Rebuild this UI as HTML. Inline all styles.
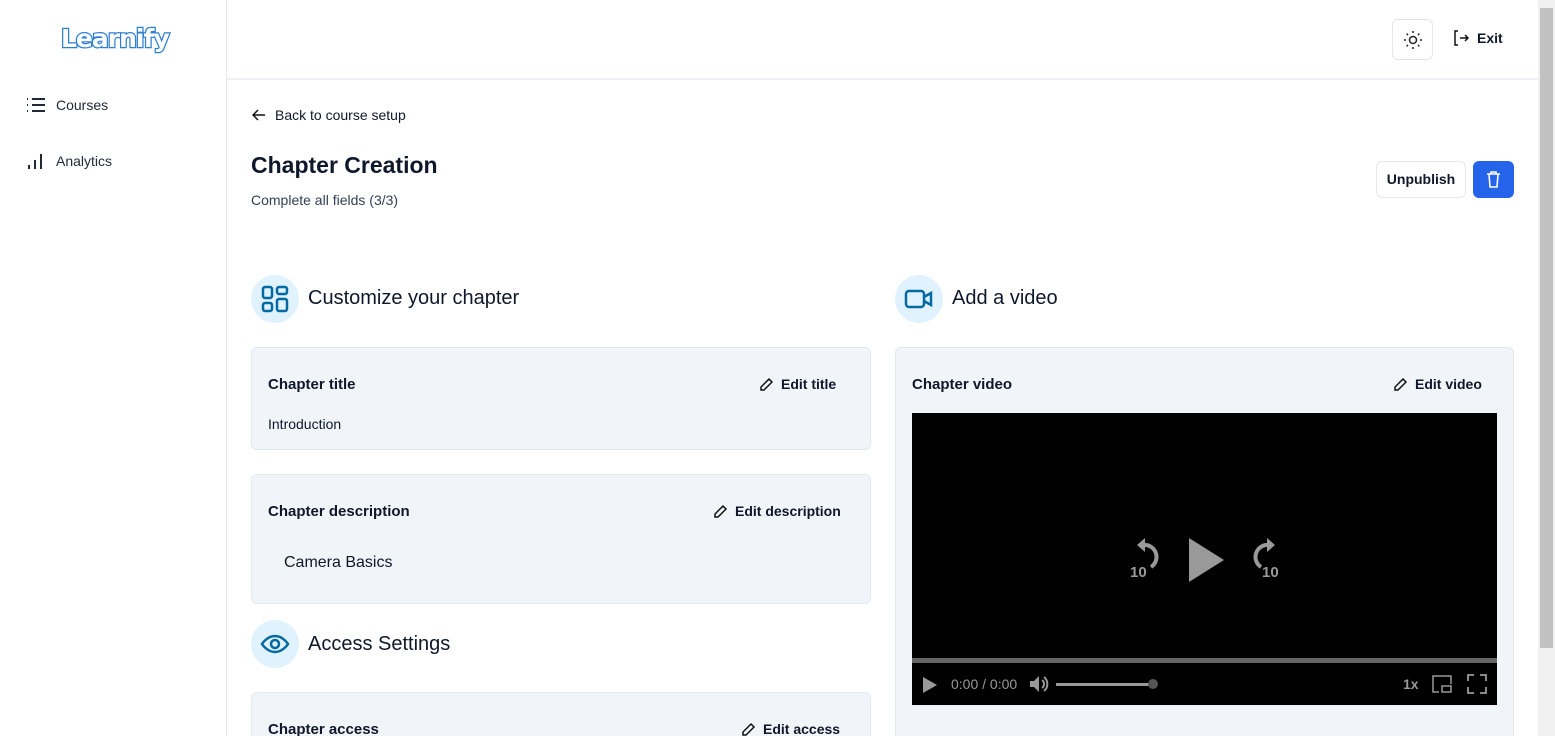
<!DOCTYPE html>
<html><head><style>
*{box-sizing:border-box;margin:0;padding:0}
html,body{width:1555px;height:736px;overflow:hidden}
body{font-family:"Liberation Sans",sans-serif;color:#0f172a;background:#fff;position:relative}
.side{position:absolute;left:0;top:0;width:227px;height:736px;border-right:1px solid #e5e7eb}
.logo{position:absolute;left:61px;top:24px;font-size:25px;font-weight:bold;color:#fff;-webkit-text-stroke:2.5px #2f7fd1;paint-order:stroke fill;letter-spacing:-1px;font-family:"DejaVu Sans",sans-serif}
.nav{position:absolute;left:26px;font-size:14px;color:#1f2937;display:flex;align-items:center;gap:10px}
.top{position:absolute;left:227px;top:0;width:1311px;height:80px;border-bottom:2px solid #eef0f3}
.sun{position:absolute;left:1392px;top:19px;width:41px;height:41px;border:1px solid #e5e7eb;border-radius:6px}
.exit{position:absolute;left:1453px;top:30px;font-size:14px;font-weight:bold;display:flex;gap:8px;align-items:center}
.scroll{position:absolute;left:1538px;top:0;width:17px;height:736px;background:#f1f1f1}
.thumb{position:absolute;left:2px;top:8px;width:13px;height:640px;background:#c1c1c1}
.card{position:absolute;background:#f1f5f9;border:1px solid #e2e8f0;border-radius:6px}
.lbl{position:absolute;font-size:15px;font-weight:bold}
.edit{position:absolute;font-size:14px;font-weight:bold;display:flex;gap:7px;align-items:center}
.circ{position:absolute;width:48px;height:48px;border-radius:50%;background:#e0f2fe;display:flex;align-items:center;justify-content:center}
.h2{position:absolute;font-size:20px}
</style></head><body>
<div class="side">
<div class="logo">Learnify</div>
<div class="nav" style="top:97px"><svg width="20" height="16" viewBox="0 0 20 16" stroke="#1f2937" stroke-width="2"><path d="M1 2h1M1 8h1M1 14h1M6 2h13M6 8h13M6 14h13"/></svg>Courses</div>
<div class="nav" style="top:152px"><svg width="20" height="18" viewBox="0 0 20 18" stroke="#1f2937" stroke-width="2"><path d="M3 17v-4M9 17V8M15 17V2"/></svg>Analytics</div>
</div>
<div class="top"></div>
<div class="sun"><svg style="margin:10px" width="20" height="20" viewBox="0 0 20 20" stroke="#222" stroke-width="1.5" fill="none"><circle cx="10" cy="10" r="3.5"/><path d="M10 1v2M10 17v2M1 10h2M17 10h2M3.6 3.6l1.4 1.4M15 15l1.4 1.4M3.6 16.4L5 15M15 5l1.4-1.4"/></svg></div>
<div class="exit"><svg width="16" height="16" viewBox="0 0 16 16" stroke="#111" stroke-width="1.5" fill="none"><path d="M5 1H2v14h3M7 8h8M12 5l3 3-3 3"/></svg>Exit</div>
<div class="scroll"><div class="thumb"></div></div>
<div style="position:absolute;left:252px;top:107px;font-size:14px;display:flex;gap:9px;align-items:center"><svg width="14" height="12" viewBox="0 0 14 12" stroke="#111" stroke-width="1.5" fill="none"><path d="M13 6H1M6 1L1 6l5 5"/></svg>Back to course setup</div>
<div style="position:absolute;left:251px;top:152px;font-size:23px;font-weight:bold">Chapter Creation</div>
<div style="position:absolute;left:251px;top:192px;font-size:14px;color:#334155">Complete all fields (3/3)</div>
<div style="position:absolute;left:1376px;top:161px;width:90px;height:37px;border:1px solid #e5e7eb;border-radius:6px;font-size:14px;font-weight:bold;text-align:center;line-height:35px">Unpublish</div>
<div style="position:absolute;left:1473px;top:161px;width:41px;height:37px;background:#2563eb;border-radius:6px"><svg style="margin:10px 13px" width="15" height="17" viewBox="0 0 15 17" stroke="#fff" stroke-width="1.6" fill="none"><path d="M1 3h13M5 3V1h5v2M3 3l1 13h7l1-13"/></svg></div>

<div class="circ" style="left:251px;top:275px"><svg width="28" height="28" viewBox="0 0 28 28" stroke="#0369a1" stroke-width="2.5" fill="none"><rect x="2" y="2" width="9" height="11" rx="2"/><rect x="16" y="2" width="10" height="7" rx="2"/><rect x="2" y="18" width="9" height="8" rx="2"/><rect x="16" y="14" width="10" height="12" rx="2"/></svg></div>
<div class="h2" style="left:308px;top:287px">Customize your chapter</div>
<div class="circ" style="left:895px;top:275px"><svg width="30" height="22" viewBox="0 0 30 22" stroke="#0369a1" stroke-width="2.5" fill="none"><rect x="2" y="3" width="18" height="16" rx="3"/><path d="M20 9l7-4v12l-7-4"/></svg></div>
<div class="h2" style="left:952px;top:287px">Add a video</div>

<div class="card" style="left:251px;top:347px;width:620px;height:103px"></div>
<div class="lbl" style="left:268px;top:376px">Chapter title</div>
<div class="edit" style="left:759px;top:376px"><svg width="15" height="15" viewBox="0 0 15 15" stroke="#111" stroke-width="1.5" fill="none"><path d="M10 2l3 3-8 8H2v-3z"/></svg>Edit title</div>
<div style="position:absolute;left:268px;top:416px;font-size:14px">Introduction</div>

<div class="card" style="left:251px;top:474px;width:620px;height:130px"></div>
<div class="lbl" style="left:268px;top:503px">Chapter description</div>
<div class="edit" style="left:713px;top:503px"><svg width="15" height="15" viewBox="0 0 15 15" stroke="#111" stroke-width="1.5" fill="none"><path d="M10 2l3 3-8 8H2v-3z"/></svg>Edit description</div>
<div style="position:absolute;left:284px;top:554px;font-size:16px">Camera Basics</div>

<div class="circ" style="left:251px;top:620px"><svg width="30" height="22" viewBox="0 0 30 22" stroke="#0369a1" stroke-width="2.5" fill="none"><path d="M2 11s5-8 13-8 13 8 13 8-5 8-13 8S2 11 2 11z"/><circle cx="15" cy="11" r="4"/></svg></div>
<div class="h2" style="left:308px;top:633px">Access Settings</div>
<div class="card" style="left:251px;top:692px;width:620px;height:60px"></div>
<div class="lbl" style="left:268px;top:721px">Chapter access</div>
<div class="edit" style="left:741px;top:721px"><svg width="15" height="15" viewBox="0 0 15 15" stroke="#111" stroke-width="1.5" fill="none"><path d="M10 2l3 3-8 8H2v-3z"/></svg>Edit access</div>

<div class="card" style="left:895px;top:347px;width:619px;height:400px"></div>
<div class="lbl" style="left:912px;top:376px">Chapter video</div>
<div class="edit" style="left:1393px;top:376px"><svg width="15" height="15" viewBox="0 0 15 15" stroke="#111" stroke-width="1.5" fill="none"><path d="M10 2l3 3-8 8H2v-3z"/></svg>Edit video</div>
<div style="position:absolute;left:912px;top:413px;width:585px;height:292px;background:#000">
<svg style="position:absolute;left:215px;top:122px" width="160" height="50" viewBox="0 0 160 50">
<g fill="none" stroke="#999" stroke-width="4"><path d="M16 10a12 12 0 0 1 8 22"/><path d="M142 10a12 12 0 0 0-8 22"/></g>
<path d="M10 10l8-7v14z" fill="#999"/><path d="M148 10l-8-7v14z" fill="#999"/>
<text x="3" y="42" font-size="15" font-weight="bold" fill="#999" font-family="Liberation Sans">10</text>
<text x="135" y="42" font-size="15" font-weight="bold" fill="#999" font-family="Liberation Sans">10</text>
<path d="M62 3l35 22-35 22z" fill="#999"/></svg>
<div style="position:absolute;left:0;top:245px;width:585px;height:5px;background:#666"></div>
<svg style="position:absolute;left:10px;top:263px" width="16" height="18"><path d="M1 1l14 8-14 8z" fill="#999"/></svg>
<div style="position:absolute;left:39px;top:263px;font-size:14px;color:#999">0:00 / 0:00</div>
<svg style="position:absolute;left:117px;top:262px" width="20" height="18" viewBox="0 0 20 18"><path d="M1 6h4l5-5v16l-5-5H1z" fill="#999"/><path d="M13 5a5 5 0 0 1 0 8M15 2a9 9 0 0 1 0 14" stroke="#999" stroke-width="2" fill="none"/></svg>
<div style="position:absolute;left:144px;top:270px;width:96px;height:3px;background:#999"></div>
<div style="position:absolute;left:236px;top:266px;width:10px;height:10px;border-radius:50%;background:#555"></div>
<div style="position:absolute;left:491px;top:263px;font-size:14px;font-weight:bold;color:#999">1x</div>
<svg style="position:absolute;left:519px;top:261px" width="22" height="20"><path d="M8 18H2V2h18v8" stroke="#999" stroke-width="1.5" fill="none"/><rect x="11" y="12" width="9" height="6" stroke="#999" stroke-width="1.5" fill="none"/></svg>
<svg style="position:absolute;left:555px;top:261px" width="20" height="20"><path d="M1 7V1h6M13 1h6v6M19 13v6h-6M7 19H1v-6" stroke="#999" stroke-width="1.8" fill="none"/></svg>
</div>
</body></html>
